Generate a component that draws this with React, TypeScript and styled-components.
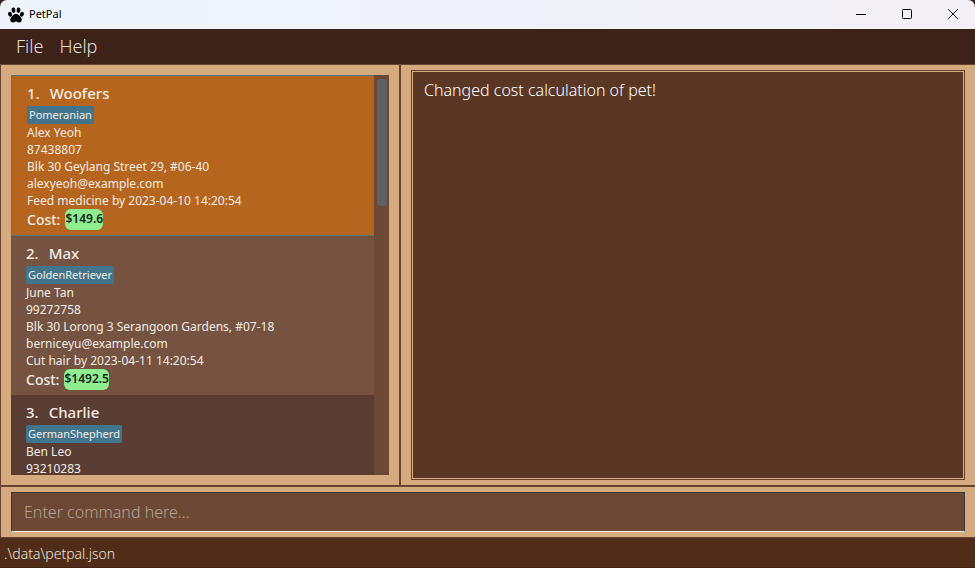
import React from "react";
import styled, { createGlobalStyle, css } from "styled-components";

const GlobalStyle = createGlobalStyle`
  *, *::before, *::after { box-sizing: border-box; }
  html, body, #root { height: 100%; }
  body {
    margin: 0;
    overflow: hidden;
    background: #3c2218;
    font-family: "Noto Sans", "Open Sans", sans-serif;
  }
  button, input { font-family: inherit; }
`;

const edge = "#67422e";
const tan = "#d6aa7f";

const Window = styled.div`
  display: flex;
  flex-direction: column;
  height: 100%;
`;

const TitleBar = styled.header`
  display: flex;
  align-items: center;
  height: 29px;
  flex: none;
  padding-left: 8px;
  background: linear-gradient(90deg, #eef4fb, #f0f3fa 40%, #f4f1f6);
  border-radius: 7px 7px 0 0;
  color: #000;
`;

const TitleText = styled.h1`
  flex: 1;
  margin: 0 0 2px 5px;
  font-size: 11px;
  line-height: 16px;
  font-weight: 400;
`;

const WindowButtons = styled.div`
  display: flex;
  gap: 2px;
`;

const WindowButton = styled.button`
  display: grid;
  place-items: center;
  width: 44px;
  height: 28px;
  padding: 0 0 2px;
  border: 0;
  background: none;
`;

const MenuBar = styled.nav`
  display: flex;
  flex: none;
  height: 36px;
  padding: 0 8px;
  background: #3c2218;
  border-bottom: 1px solid ${edge};
`;

const MenuButton = styled.button`
  padding: 0 8px 2px;
  border: 0;
  background: none;
  color: #e6dfdb;
  font-size: 18px;
  font-weight: 300;
  line-height: 32px;
`;

const Main = styled.main`
  display: grid;
  grid-template-columns: 398fr 576fr;
  flex: 1;
  min-height: 0;
  border-left: 1px solid ${edge};
  background: ${tan};
`;

const ListPane = styled.section`
  display: flex;
  min-width: 0;
  min-height: 0;
  padding: 10px;
`;

const PetList = styled.ol`
  flex: 1;
  min-width: 0;
  margin: 0;
  padding: 0;
  overflow: hidden;
  list-style: none;
`;

const ScrollTrack = styled.div`
  flex: none;
  width: 15px;
  padding: 4px 2px 4px 3px;
  background: #6c4835;
`;

const ScrollThumb = styled.div`
  height: 127px;
  border-radius: 3px;
  background: #606060;
`;

const shades = {
  selected: css`
    background: #b5651d;
    border: 1px solid #4a7a80;
  `,
  even: css`
    background: #755340;
  `,
  odd: css`
    background: #5a3d32;
  `,
};

const PetCard = styled.li<{ $shade: keyof typeof shades }>`
  padding: 5px 15px;
  color: #f3ebe4;
  ${(p) => shades[p.$shade]}
`;

const PetName = styled.h2`
  display: flex;
  gap: 10px;
  margin: 0;
  font-size: 15px;
  font-weight: 500;
  line-height: 25px;
`;

const Breed = styled.span`
  display: block;
  width: fit-content;
  height: 18px;
  padding: 0 2px;
  border-radius: 2px;
  background: #42758b;
  font-size: 11px;
  line-height: 18px;
`;

const Detail = styled.p`
  margin: 0;
  font-size: 12px;
  line-height: 17px;
  white-space: nowrap;
`;

const CostRow = styled.div`
  display: flex;
  gap: 5px;
  height: 21px;
  font-size: 14px;
  font-weight: 500;
  line-height: 21px;
`;

const CostPill = styled.span`
  border-radius: 6px;
  background: #90ee90;
  color: #14261a;
  font-size: 12px;
  font-weight: 600;
  line-height: 19px;
`;

const ResultPane = styled.section`
  display: flex;
  min-width: 0;
  padding: 5px 10px;
  border-left: 2px solid ${edge};
`;

const ResultFrame = styled.div`
  display: flex;
  flex: 1;
  padding: 1px;
  border: 1px solid ${edge};
`;

const Result = styled.output`
  flex: 1;
  padding: 6px 11px;
  background: #5a3725;
  color: #fff;
  font-size: 16px;
  font-weight: 300;
  line-height: 24px;
`;

const CommandPane = styled.form`
  display: flex;
  flex: none;
  padding: 5px 10px;
  border-left: 1px solid ${edge};
  border-top: 2px solid ${edge};
  background: ${tan};
`;

const CommandInput = styled.input`
  flex: 1;
  min-width: 0;
  height: 40px;
  padding: 0 12px;
  border: 1px solid #3a3735;
  border-bottom-color: #fff;
  border-radius: 0;
  outline: 0;
  background: #6c4835;
  color: #fff;
  font-size: 16px;
  font-weight: 300;
  &::placeholder {
    color: #b5a292;
    opacity: 1;
  }
`;

const StatusBar = styled.footer`
  flex: none;
  height: 31px;
  padding: 0 4px;
  border-top: 1px solid ${edge};
  border-bottom: 1px solid #43250f;
  background: #4f2d19;
  color: #ece4de;
  font-size: 14px;
  font-weight: 300;
  line-height: 31px;
`;

interface Pet {
  name: string;
  breed: string;
  details: string[];
  cost: string;
  shade: keyof typeof shades;
}

const pets: Pet[] = [
  {
    name: "Woofers",
    breed: "Pomeranian",
    details: [
      "Alex Yeoh",
      "87438807",
      "Blk 30 Geylang Street 29, #06-40",
      "alexyeoh@example.com",
      "Feed medicine by 2023-04-10 14:20:54",
    ],
    cost: "$149.6",
    shade: "selected",
  },
  {
    name: "Max",
    breed: "GoldenRetriever",
    details: [
      "June Tan",
      "99272758",
      "Blk 30 Lorong 3 Serangoon Gardens, #07-18",
      "berniceyu@example.com",
      "Cut hair by 2023-04-11 14:20:54",
    ],
    cost: "$1492.5",
    shade: "even",
  },
  {
    name: "Charlie",
    breed: "GermanShepherd",
    details: ["Ben Leo", "93210283"],
    cost: "",
    shade: "odd",
  },
];

const PawIcon = () => (
  <svg width="16" height="16" viewBox="0 0 16 16" fill="#000" aria-hidden="true">
    <ellipse cx="5.5" cy="3.2" rx="1.9" ry="2.7" transform="rotate(-8 5.5 3.2)" />
    <ellipse cx="10.5" cy="3.2" rx="1.9" ry="2.7" transform="rotate(8 10.5 3.2)" />
    <ellipse cx="2.1" cy="7.2" rx="1.9" ry="2.5" transform="rotate(-22 2.1 7.2)" />
    <ellipse cx="13.9" cy="7.2" rx="1.9" ry="2.5" transform="rotate(22 13.9 7.2)" />
    <path d="M8 7c2.400 0 3.400 1.500 4.500 3 .9 1.200 1.500 2 1.200 3.500-.3 1.500-1.700 2.300-3 1.900C9.700 15.100 9 14.400 8 14.400s-1.700.7-2.700 1c-1.300.4-2.700-.4-3-1.900C2 12 2.600 11.200 3.500 10c1.100-1.500 2.100-3 4.500-3z" />
  </svg>
);

export default function App() {
  return (
    <Window>
      <GlobalStyle />
      <TitleBar>
        <PawIcon />
        <TitleText>PetPal</TitleText>
        <WindowButtons>
          <WindowButton type="button" aria-label="Minimize">
            <svg width="10" height="10" viewBox="0 0 10 10" stroke="#000">
              <path d="M0 5.500H10" />
            </svg>
          </WindowButton>
          <WindowButton type="button" aria-label="Maximize">
            <svg width="10" height="10" viewBox="0 0 10 10" stroke="#000" fill="none">
              <rect x=".5" y=".5" width="9" height="9" rx="1" />
            </svg>
          </WindowButton>
          <WindowButton type="button" aria-label="Close">
            <svg width="10" height="10" viewBox="0 0 10 10" stroke="#000">
              <path d="M0 0L10 10M10 0L0 10" />
            </svg>
          </WindowButton>
        </WindowButtons>
      </TitleBar>
      <MenuBar>
        <MenuButton type="button">File</MenuButton>
        <MenuButton type="button">Help</MenuButton>
      </MenuBar>
      <Main>
        <ListPane>
          <PetList>
            {pets.map((pet, i) => (
              <PetCard key={pet.name} $shade={pet.shade}>
                <PetName>
                  <span>{i + 1}.</span>
                  <span>{pet.name}</span>
                </PetName>
                <Breed>{pet.breed}</Breed>
                {pet.details.map((line) => (
                  <Detail key={line}>{line}</Detail>
                ))}
                {pet.cost && (
                  <CostRow>
                    <span>Cost:</span>
                    <CostPill>{pet.cost}</CostPill>
                  </CostRow>
                )}
              </PetCard>
            ))}
          </PetList>
          <ScrollTrack>
            <ScrollThumb />
          </ScrollTrack>
        </ListPane>
        <ResultPane>
          <ResultFrame>
            <Result>Changed cost calculation of pet!</Result>
          </ResultFrame>
        </ResultPane>
      </Main>
      <CommandPane onSubmit={(e) => e.preventDefault()}>
        <CommandInput aria-label="Command" placeholder="Enter command here..." />
      </CommandPane>
      <StatusBar>.\data\petpal.json</StatusBar>
    </Window>
  );
}
